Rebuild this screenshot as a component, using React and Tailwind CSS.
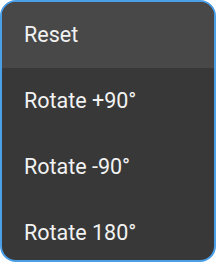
const items = ["Reset", "Rotate +90°", "Rotate -90°", "Rotate 180°"];

export default function App() {
  return (
    <div className="w-[216px] h-[262px] overflow-hidden rounded-[16px] border-2 border-[#4a9fe6] bg-[#383838] font-['Roboto',sans-serif]">
      {items.map((label, i) => (
        <div
          key={label}
          className={`flex h-[66px] items-center pl-[22px] text-[21.5px] text-[#f2f2f2] ${
            i === 0 ? "bg-[#484848]" : ""
          }`}
        >
          {label}
        </div>
      ))}
    </div>
  );
}
